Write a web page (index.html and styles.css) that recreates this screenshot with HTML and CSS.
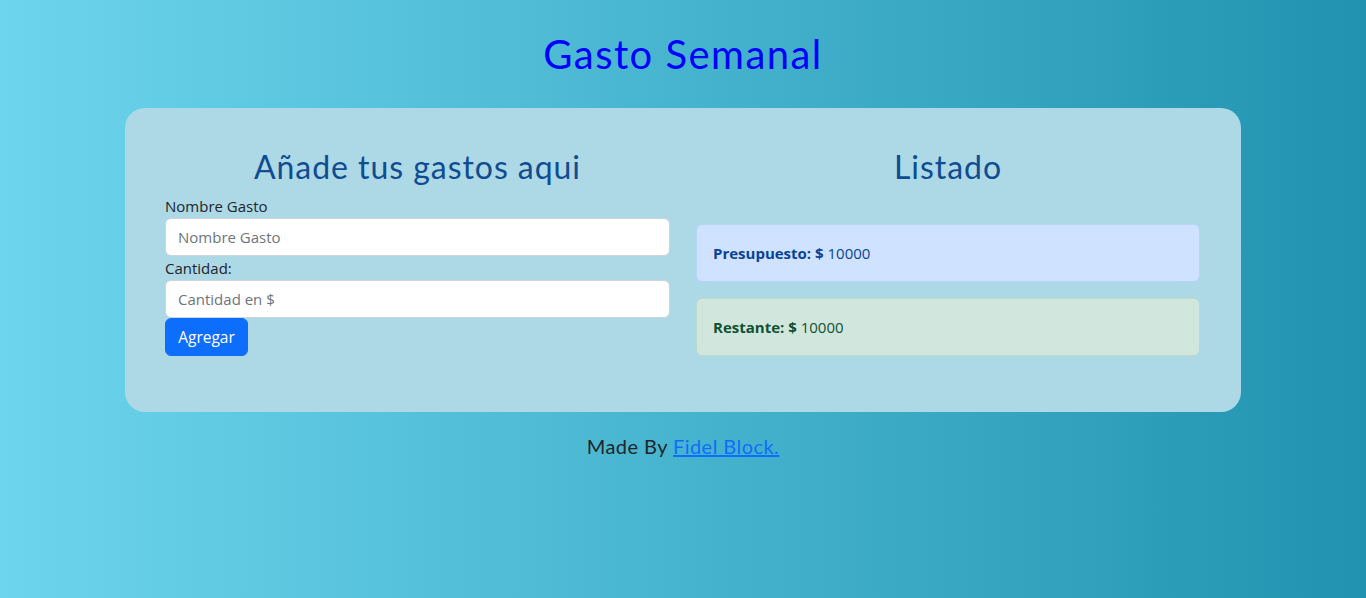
FILE: index.html
```html
<!DOCTYPE html>
<html lang="es">
<head>
<meta charset="utf-8">
<title>Gasto Semanal</title>
<link rel="stylesheet" href="styles.css">
</head>
<body>
<div class="page">
  <header class="header">
    <h1 class="title">Gasto Semanal</h1>
  </header>
  <main class="container">
    <div class="card">
      <section class="col">
        <h2 class="subtitle">Añade tus gastos aqui</h2>
        <form class="form">
          <label class="label">Nombre Gasto</label>
          <input class="input" type="text" placeholder="Nombre Gasto">
          <label class="label">Cantidad:</label>
          <input class="input" type="text" placeholder="Cantidad en $">
          <button class="btn" type="button">Agregar</button>
        </form>
      </section>
      <section class="col">
        <h2 class="subtitle">Listado</h2>
        <div class="alerts">
          <div class="alert alert-primary"><strong>Presupuesto: $</strong> 10000</div>
          <div class="alert alert-success"><strong>Restante: $</strong> 10000</div>
        </div>
      </section>
    </div>
  </main>
  <footer class="footer">
    <p class="made">Made By <a class="link" href="#">Fidel Block.</a></p>
  </footer>
</div>
</body>
</html>
```

FILE: styles.css
```css
* { box-sizing: border-box; }
html, body { margin: 0; padding: 0; height: 100%; }
body {
  background: linear-gradient(to right, #6dd5ed, #2193b0);
  font-family: "Open Sans", "Noto Sans", sans-serif;
  font-size: 15px;
  line-height: 24px;
  color: #212529;
}
.page { min-height: 100%; }
.header { padding-top: 30px; text-align: center; }
.title {
  margin: 0;
  font-family: "Lato", sans-serif;
  font-weight: 400;
  font-size: 40px;
  line-height: 48px;
  letter-spacing: 1.45px;
  color: #0000ff;
}
.container {
  width: 1116px;
  margin: 30px auto 0;
}
.card {
  background: #add8e6;
  border-radius: 20px;
  padding: 40px 41px 40px 40px;
  display: grid;
  grid-template-columns: 505px 504px;
  column-gap: 26px;
  align-items: start;
}
.subtitle {
  margin: 0 0 8px;
  text-align: center;
  font-family: "Lato", sans-serif;
  font-weight: 400;
  font-size: 32px;
  line-height: 38px;
  letter-spacing: 0.95px;
  color: #0f4c91;
}
.form { display: flex; flex-direction: column; align-items: stretch; margin-bottom: 16px; }
.label { display: block; height: 24px; }
.input {
  display: block;
  width: 100%;
  height: 38px;
  padding: 6px 12px;
  border: 1px solid #ced4da;
  border-radius: 6px;
  background: #fff;
  font-family: inherit;
  font-size: 15px;
  color: #212529;
}
.input::placeholder { color: #6c757d; opacity: 1; }
.btn {
  align-self: flex-start;
  height: 38px;
  width: 83px;
  padding: 6px 12px;
  border: 1px solid #0d6efd;
  border-radius: 6px;
  background: #0d6efd;
  color: #fff;
  font-family: inherit;
  font-size: 15.5px;
  line-height: 24px;
}
.alerts { padding-top: 30px; display: flex; flex-direction: column; gap: 16px; margin-bottom: 16px; }
.alert {
  padding: 16px;
  border: 1px solid transparent;
  border-radius: 6px;
  height: 58px;
}
.alert-primary { background: #cfe2ff; border-color: #b6d4fe; color: #084298; }
.alert-success { background: #d1e7dd; border-color: #badbcc; color: #0f5132; }
.alert strong { font-weight: 700; }
.footer { text-align: center; padding-top: 19px; }
.made {
  margin: 0;
  font-family: "Lato", sans-serif;
  font-weight: 400;
  font-size: 20px;
  line-height: 30px;
  letter-spacing: 0.45px;
  color: #212529;
}
.link { color: #0d6efd; text-decoration: underline; }
```
